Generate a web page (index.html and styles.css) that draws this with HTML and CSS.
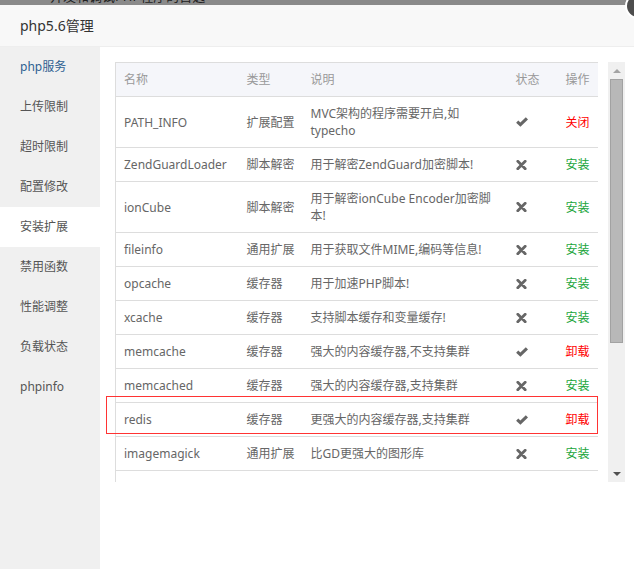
FILE: index.html
```html
<!DOCTYPE html>
<html>
<head>
<meta charset="utf-8">
<link rel="stylesheet" href="styles.css">
</head>
<body>
<div class="backdrop"><span class="backdrop-text">开发和调试PHP程序的首选</span></div>
<div class="dialog">
  <div class="title">php5.6管理</div>
  <div class="body">
    <ul class="side">
      <li class="side-item current">php服务</li>
      <li class="side-item">上传限制</li>
      <li class="side-item">超时限制</li>
      <li class="side-item">配置修改</li>
      <li class="side-item active">安装扩展</li>
      <li class="side-item">禁用函数</li>
      <li class="side-item">性能调整</li>
      <li class="side-item">负载状态</li>
      <li class="side-item">phpinfo</li>
    </ul>
    <div class="content">
      <div class="tablebox">
        <table class="tbl">
          <colgroup>
            <col class="c-name"><col class="c-type"><col class="c-desc"><col class="c-stat"><col class="c-op">
          </colgroup>
          <thead>
            <tr><th>名称</th><th>类型</th><th>说明</th><th>状态</th><th>操作</th></tr>
          </thead>
          <tbody>
            <tr><td>PATH_INFO</td><td>扩展配置</td><td class="desc">MVC架构的程序需要开启,如<br>typecho</td><td><svg class="ic" width="12" height="10" viewBox="0 0 12 10"><path class="ok" d="M1.2 4.6 L4.4 7.7 L10.9 1.3"/></svg></td><td class="red">关闭</td></tr>
            <tr><td>ZendGuardLoader</td><td>脚本解密</td><td class="desc">用于解密ZendGuard加密脚本!</td><td><svg class="ic" width="11" height="10" viewBox="0 0 11 10"><path class="no" d="M1.8 1.3 L9.2 8.7 M9.2 1.3 L1.8 8.7"/></svg></td><td class="green">安装</td></tr>
            <tr><td>ionCube</td><td>脚本解密</td><td class="desc">用于解密ionCube Encoder加密脚<br>本!</td><td><svg class="ic" width="11" height="10" viewBox="0 0 11 10"><path class="no" d="M1.8 1.3 L9.2 8.7 M9.2 1.3 L1.8 8.7"/></svg></td><td class="green">安装</td></tr>
            <tr><td>fileinfo</td><td>通用扩展</td><td class="desc">用于获取文件MIME,编码等信息!</td><td><svg class="ic" width="11" height="10" viewBox="0 0 11 10"><path class="no" d="M1.8 1.3 L9.2 8.7 M9.2 1.3 L1.8 8.7"/></svg></td><td class="green">安装</td></tr>
            <tr><td>opcache</td><td>缓存器</td><td class="desc">用于加速PHP脚本!</td><td><svg class="ic" width="11" height="10" viewBox="0 0 11 10"><path class="no" d="M1.8 1.3 L9.2 8.7 M9.2 1.3 L1.8 8.7"/></svg></td><td class="green">安装</td></tr>
            <tr><td>xcache</td><td>缓存器</td><td class="desc">支持脚本缓存和变量缓存!</td><td><svg class="ic" width="11" height="10" viewBox="0 0 11 10"><path class="no" d="M1.8 1.3 L9.2 8.7 M9.2 1.3 L1.8 8.7"/></svg></td><td class="green">安装</td></tr>
            <tr><td>memcache</td><td>缓存器</td><td class="desc">强大的内容缓存器,不支持集群</td><td><svg class="ic" width="12" height="10" viewBox="0 0 12 10"><path class="ok" d="M1.2 4.6 L4.4 7.7 L10.9 1.3"/></svg></td><td class="red">卸载</td></tr>
            <tr><td>memcached</td><td>缓存器</td><td class="desc">强大的内容缓存器,支持集群</td><td><svg class="ic" width="11" height="10" viewBox="0 0 11 10"><path class="no" d="M1.8 1.3 L9.2 8.7 M9.2 1.3 L1.8 8.7"/></svg></td><td class="green">安装</td></tr>
            <tr><td>redis</td><td>缓存器</td><td class="desc">更强大的内容缓存器,支持集群</td><td><svg class="ic" width="12" height="10" viewBox="0 0 12 10"><path class="ok" d="M1.2 4.6 L4.4 7.7 L10.9 1.3"/></svg></td><td class="red">卸载</td></tr>
            <tr><td>imagemagick</td><td>通用扩展</td><td class="desc">比GD更强大的图形库</td><td><svg class="ic" width="11" height="10" viewBox="0 0 11 10"><path class="no" d="M1.8 1.3 L9.2 8.7 M9.2 1.3 L1.8 8.7"/></svg></td><td class="green">安装</td></tr>
            <tr class="blank"><td>&nbsp;</td><td>&nbsp;</td><td>&nbsp;</td><td>&nbsp;</td><td>&nbsp;</td></tr>
          </tbody>
        </table>
      </div>
      <div class="scrollbar">
        <div class="sb-btn"><span class="arr-up"></span></div>
        <div class="sb-track"><div class="sb-thumb"></div></div>
        <div class="sb-btn"><span class="arr-down"></span></div>
      </div>
      <div class="mark"></div>
    </div>
  </div>
  <span class="close"></span>
</div>
</body>
</html>
```

FILE: styles.css
```css
* { box-sizing: border-box; }
html, body { margin: 0; padding: 0; }
body {
  width: 634px;
  height: 569px;
  overflow: hidden;
  font-family: "Noto Sans", "Noto Sans CJK SC", sans-serif;
  font-size: 12px;
  color: #666;
  background: #fff;
}
.backdrop {
  height: 5px;
  overflow: hidden;
  background: #8a8a8a;
  padding-left: 50px;
}
.backdrop-text {
  display: block;
  margin-top: -11px;
  line-height: 14px;
  font-size: 13px;
  color: #222;
}
.dialog {
  position: relative;
  height: 564px;
  display: flex;
  flex-direction: column;
}
.title {
  height: 42px;
  line-height: 41px;
  padding-left: 20px;
  font-size: 14px;
  color: #333;
  background: #f8f8f8;
  border-bottom: 1px solid #eee;
}
.body {
  flex: 1;
  display: flex;
}
.side {
  list-style: none;
  margin: 0;
  padding: 0;
  width: 100px;
  background: #f0f0f0;
}
.side-item {
  height: 40px;
  line-height: 39px;
  padding-left: 20px;
  color: #555;
}
.side-item.current { color: #2e5f91; }
.side-item.active { background: #fff; }
.content {
  position: relative;
  flex: 1;
  display: flex;
  align-items: flex-start;
  gap: 10px;
  padding: 15px 0 0 15px;
}
.tablebox {
  width: 483px;
  height: 420px;
  overflow: hidden;
}
.tbl {
  width: 483px;
  table-layout: fixed;
  border-collapse: collapse;
  border: 1px solid #ddd;
}
.c-name { width: 123px; }
.c-type { width: 64px; }
.c-desc { width: 205px; }
.c-stat { width: 50px; }
.c-op { width: 41px; }
.tbl th, .tbl td {
  padding: 8px 0 8px 8px;
  line-height: 17px;
  text-align: left;
  vertical-align: middle;
  white-space: nowrap;
  border-bottom: 1px solid #ddd;
  font-weight: normal;
}
.tbl th {
  background: #f5f6fa;
  color: #999;
}
.tbl td { color: #666; }
.tbl td.red { color: #f00; }
.tbl td.green { color: #20a53a; }
.ic { display: block; }
.ok {
  fill: none;
  stroke: #666;
  stroke-width: 3.1;
}
.no {
  fill: none;
  stroke: #666;
  stroke-width: 2.8;
  stroke-linecap: round;
}
.scrollbar {
  width: 17px;
  height: 420px;
  background: #f0f0f0;
  display: flex;
  flex-direction: column;
}
.sb-btn {
  height: 17px;
  display: flex;
  align-items: center;
  justify-content: center;
}
.arr-up {
  width: 0; height: 0;
  border-left: 4px solid transparent;
  border-right: 4px solid transparent;
  border-bottom: 4px solid #a3a3a3;
}
.arr-down {
  width: 0; height: 0;
  border-left: 4px solid transparent;
  border-right: 4px solid transparent;
  border-top: 4px solid #505050;
}
.sb-track {
  flex: 1;
  padding: 0 2px;
}
.sb-thumb {
  height: 264px;
  background: #b8b8b8;
  border: 1px solid #a2a2a2;
}
.mark {
  position: absolute;
  left: 6px;
  top: 349px;
  width: 492px;
  height: 38px;
  border: 1px solid #f33;
}
.close {
  position: absolute;
  left: 625px;
  top: -12px;
  width: 26px;
  height: 26px;
  border-radius: 50%;
  background: #4d4d4d;
  border: 2px solid #fff;
}
```
